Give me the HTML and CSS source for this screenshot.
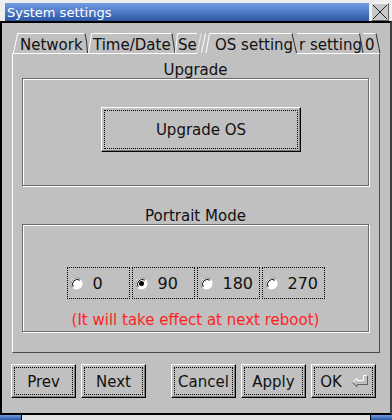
FILE: index.html
```html
<!DOCTYPE HTML>
<html>
	<head>
		<title>System settings</title>
		<link rel="stylesheet" href="styles.css">
	</head>
	<body>
		<div class="window">
			<!-- title bar with close box -->
			<div class="titleRow">
				<div class="title">System settings</div>
				<div class="close">
					<svg width="16" height="16" viewBox="0 0 16 16"><path d="M1 1 L15 15 M15 1 L1 15" stroke="#202020" stroke-width="1" fill="none"/></svg>
				</div>
			</div>

			<div class="main">
				<div class="tabs">
					<div class="tab tabNetwork">
						<svg width="76" height="20"><path d="M1.5 20 L5.5 0.5 H73" stroke="#fff" fill="none"/><path d="M73 0.5 Q75 8 75.5 20" stroke="#303030" fill="none"/></svg>
						<span class="tabText">Network</span>
					</div>
					<div class="tab tabTime">
						<svg width="87" height="20"><path d="M0.5 20 L3.5 0.5 H84" stroke="#fff" fill="none"/><path d="M84 0.5 L87 20" stroke="#303030" fill="none"/></svg>
						<span class="tabText">Time/Date</span>
					</div>
					<div class="tab tabSec">
						<svg width="22" height="20"><path d="M0.5 20 L2.5 0.5 H22" stroke="#fff" fill="none"/></svg>
						<span class="tabText">Se</span>
					</div>
					<div class="tab tabOs">
						<svg width="100" height="20"><path d="M0.5 20 L4 0.5" stroke="#e8e8e8" fill="none"/><path d="M4.5 20 L8.5 0.5 M9 20 L12.5 0.5 H95" stroke="#fff" fill="none"/><path d="M95 0.5 L99.5 20" stroke="#303030" fill="none"/></svg>
						<span class="tabText">OS setting</span>
					</div>
					<div class="tab tabPower">
						<svg width="66" height="20"><path d="M0 0.5 H62.5" stroke="#fff" fill="none"/><path d="M62.5 0.5 L66 20" stroke="#303030" fill="none"/></svg>
						<span class="tabText">r setting</span>
					</div>
					<div class="tab tabLast">
						<svg width="17" height="20"><path d="M0 0.5 H13" stroke="#fff" fill="none"/><path d="M13 0.5 L17 20" stroke="#303030" fill="none"/></svg>
						<span class="tabText">0</span>
					</div>
				</div>

				<div class="pane">
					<div class="groupTitle">Upgrade</div>
					<div class="group">
						<button class="btn upgradeBtn">Upgrade OS</button>
					</div>

					<div class="groupTitle portraitTitle">Portrait Mode</div>
					<div class="group">
						<div class="radios">
							<div class="radio">
								<svg width="13" height="13" viewBox="0 0 13 13"><circle cx="6.5" cy="6.5" r="6" fill="#fff"/><path d="M2.3 10.7 A6 6 0 0 1 10.7 2.3" stroke="#808080" fill="none"/><path d="M3.2 9.8 A4.8 4.8 0 0 1 9.8 3.2" stroke="#000" fill="none"/></svg>
								<span class="radioText">0</span>
							</div>
							<div class="radio">
								<svg width="13" height="13" viewBox="0 0 13 13"><circle cx="6.5" cy="6.5" r="6" fill="#fff"/><path d="M2.3 10.7 A6 6 0 0 1 10.7 2.3" stroke="#808080" fill="none"/><path d="M3.2 9.8 A4.8 4.8 0 0 1 9.8 3.2" stroke="#000" fill="none"/><circle cx="6.5" cy="6.5" r="2.5" fill="#000"/></svg>
								<span class="radioText">90</span>
							</div>
							<div class="radio">
								<svg width="13" height="13" viewBox="0 0 13 13"><circle cx="6.5" cy="6.5" r="6" fill="#fff"/><path d="M2.3 10.7 A6 6 0 0 1 10.7 2.3" stroke="#808080" fill="none"/><path d="M3.2 9.8 A4.8 4.8 0 0 1 9.8 3.2" stroke="#000" fill="none"/></svg>
								<span class="radioText">180</span>
							</div>
							<div class="radio">
								<svg width="13" height="13" viewBox="0 0 13 13"><circle cx="6.5" cy="6.5" r="6" fill="#fff"/><path d="M2.3 10.7 A6 6 0 0 1 10.7 2.3" stroke="#808080" fill="none"/><path d="M3.2 9.8 A4.8 4.8 0 0 1 9.8 3.2" stroke="#000" fill="none"/></svg>
								<span class="radioText">270</span>
							</div>
						</div>
						<div class="note">(It will take effect at next reboot)</div>
					</div>
				</div>

				<div class="actions">
					<button class="btn smallBtn">Prev</button>
					<button class="btn smallBtn">Next</button>
					<button class="btn smallBtn cancelBtn">Cancel</button>
					<button class="btn smallBtn">Apply</button>
					<button class="btn smallBtn okBtn">OK
						<svg width="18" height="14" viewBox="0 0 18 14"><path d="M1.5 8.5 L6 4 L6 6.5 L12.5 6.5 L12.5 1.5 L16.5 1.5" stroke="#fff" fill="none"/><path d="M16.5 1.5 L16.5 10.5 L6 10.5 L6 13 L1.5 8.5" stroke="#606060" fill="none"/></svg>
					</button>
				</div>
			</div>

			<div class="resizeBar">
				<span class="grip"></span>
				<span class="barMid"></span>
				<span class="grip"></span>
			</div>
		</div>
	</body>
</html>
```

FILE: styles.css
```css
body
{
	margin:0;
	font-family:"DejaVu Sans", sans-serif;
}

.window
{
	width:392px;
	height:420px;
	background-color:#c0c0c0;
	display:flex;
	flex-direction:column;
}

.titleRow
{
	display:flex;
	gap:2px;
	height:21px;
	box-sizing:border-box;
	padding:3px 3px 0 5px;
	background-color:#eeeeee;
}
.title
{
	flex:1;
	display:flex;
	align-items:center;
	padding-left:2px;
	background:linear-gradient(#719ce4, #2d56a4);
	color:#fff;
	font-size:13px;
}
.close
{
	width:18px;
	box-sizing:border-box;
	background-color:#c8c8c8;
	border:1px solid;
	border-color:#f4f4f4 #606060 #606060 #f4f4f4;
}
.close svg
{
	display:block;
}

.main
{
	flex:1;
	border:2px solid #000;
	border-right-color:#404040;
	padding:10px 10px 15px;
}

/* tab strip */
.tabs
{
	display:flex;
	align-items:flex-start;
	height:20px;
	font-size:15px;
	color:#111;
}
.tab
{
	position:relative;
	box-sizing:border-box;
	height:20px;
	padding-top:5px;
	line-height:15px;
	white-space:nowrap;
}
.tab svg
{
	position:absolute;
	left:0;
	top:0;
	overflow:visible;
}
.tabText
{
	position:relative;
}
.tabNetwork { width:76px; padding-left:8px; }
.tabTime { width:87px; padding-left:5px; }
.tabSec { width:22px; padding-left:3px; }
.tabOs
{
	width:100px;
	height:21px;
	margin-bottom:-1px;
	padding-left:18px;
	background-color:#c0c0c0;
	z-index:1;
}
.tabPower { width:66px; padding-left:2px; }
.tabLast { width:17px; padding-left:2px; }

.pane
{
	height:300px;
	box-sizing:border-box;
	border:1px solid;
	border-color:#fff #4a4a4a #4a4a4a #fff;
	padding:8px 10px 20px 9px;
}

.groupTitle
{
	text-align:center;
	font-size:15px;
	line-height:16px;
	color:#111;
}
.portraitTitle
{
	margin-top:22px;
}
.group
{
	height:108px;
	box-sizing:border-box;
	border:1px solid #6a6a6a;
	box-shadow:inset 1px 1px 0 #fff, 1px 1px 0 #fff;
	overflow:hidden;
}

.btn
{
	box-sizing:border-box;
	display:flex;
	align-items:center;
	justify-content:center;
	padding:0;
	background-color:#c0c0c0;
	border:1px solid;
	border-color:#fff #000 #000 #fff;
	box-shadow:inset -1px -1px 0 #808080;
	outline:1px dotted #000;
	outline-offset:-4px;
	font:15px "DejaVu Sans", sans-serif;
	color:#111;
}
.upgradeBtn
{
	width:200px;
	height:45px;
	margin:28px 0 0 78px;
}

.radios
{
	display:flex;
	justify-content:center;
	gap:2px;
	margin-top:42px;
}
.radio
{
	width:63px;
	height:32px;
	box-sizing:border-box;
	display:flex;
	align-items:center;
	padding:1px 0 0 2px;
	border:1px dotted #000;
	font-size:16px;
	color:#111;
}
.radio svg
{
	display:block;
}
.radioText
{
	margin-left:10px;
}
.note
{
	margin-top:13px;
	text-align:center;
	font-size:15px;
	line-height:16px;
	color:#ff1f1f;
}

.actions
{
	display:flex;
	gap:5px;
	margin:11px 0 0 -1px;
}
.smallBtn
{
	width:65px;
	height:34px;
	padding-top:2px;
}
.cancelBtn
{
	margin-left:20px;
}
.okBtn
{
	gap:9px;
	padding-left:2px;
}
.okBtn svg
{
	display:block;
	margin-top:-2px;
}

.resizeBar
{
	display:flex;
	height:5px;
}
.grip
{
	width:21px;
	background:linear-gradient(#719ce4, #2d56a4);
}
.barMid
{
	flex:1;
	background-color:#e4e4e4;
	border-left:1px solid #000;
	border-right:1px solid #000;
}
```
